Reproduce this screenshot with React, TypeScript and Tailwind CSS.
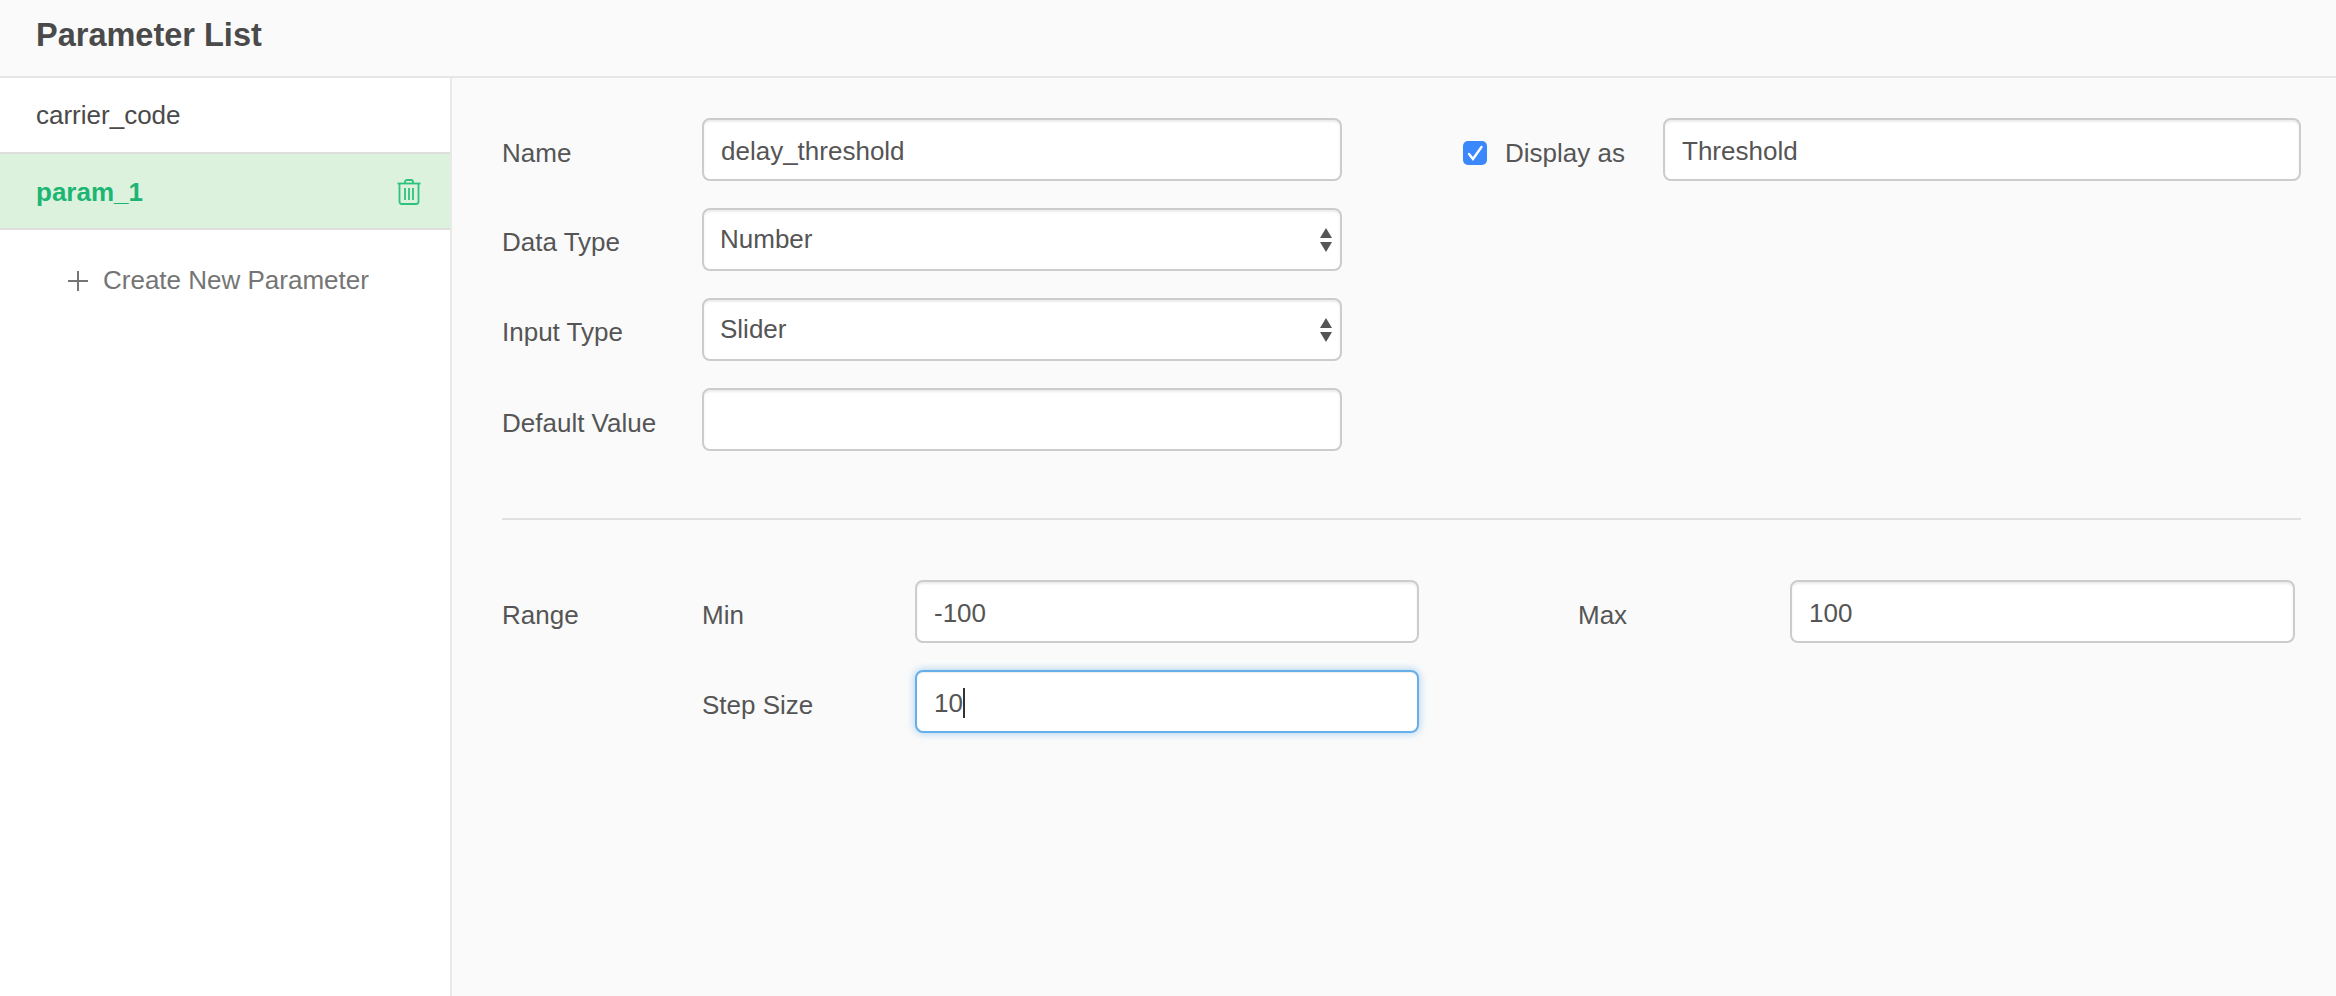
const box =
  "h-[63px] shrink-0 rounded-lg border-2 border-[#cccccc] bg-white text-[26px] text-[#555555] shadow-[inset_0_2px_2px_rgba(0,0,0,0.075)] outline-none";
const field = `${box} px-[17px] pt-[3px]`;
const rangeField = `${box} px-[17px] pt-[4px]`;

function Label({ text, width, offset = "pt-[7px]" }: { text: string; width: string; offset?: string }) {
  return <div className={`${width} ${offset} shrink-0 text-[26px] text-[#555555]`}>{text}</div>;
}

function Arrows() {
  return (
    <svg className="pointer-events-none absolute right-[10px] top-[20px]" width="12" height="24" viewBox="0 0 12 24">
      <path d="M6 0L12 10H0Z M6 24L0 14H12Z" fill="#555555" />
    </svg>
  );
}

function SelectField({ value }: { value: string }) {
  return (
    <div className="relative w-[640px] shrink-0">
      <select defaultValue={value} className={`${box} w-full appearance-none px-[16px]`}>
        <option>{value}</option>
      </select>
      <Arrows />
    </div>
  );
}

function Row({ label, offset, children }: { label: string; offset?: string; children: React.ReactNode }) {
  return (
    <div className="flex h-[63px] items-center">
      <Label text={label} width="w-[200px]" offset={offset} />
      {children}
    </div>
  );
}

export default function App() {
  return (
    <div className="flex h-[996px] w-[2336px] flex-col overflow-hidden bg-[#fafafa] font-['Liberation_Sans',Arial,sans-serif]">
      <header className="flex h-[78px] shrink-0 items-center border-b-2 border-[#e6e6e6] pb-[6px] pl-[36px] text-[32.500px] font-bold text-[#4a4a4a]">
        Parameter List
      </header>
      <div className="flex min-h-0 flex-1">
        <aside className="w-[452px] shrink-0 border-r-2 border-[#e9e9e9] bg-white">
          <div className="flex h-[74px] items-center pl-[36px] text-[26px] text-[#4a4a4a]">carrier_code</div>
          <div className="flex h-[78px] items-center justify-between border-y-2 border-[#dedede] bg-[#dcf2dd] pl-[36px] pr-[29px] text-[26px] font-bold text-[#1cb573]">
            <span className="pt-[2px]">param_1</span>
            <svg className="mt-[2px]" width="24" height="26" viewBox="0 0 24 26" fill="none" stroke="#2ec27e" strokeWidth="1.800">
              <path d="M0.500 4.500H23.500" />
              <path d="M8 4.500V3C8 1.800 9 1 10.200 1H13.800C15 1 16 1.800 16 3V4.500" />
              <path d="M2.500 4.500V22.500C2.500 24 3.500 25 5 25H19C20.500 25 21.500 24 21.500 22.500V4.500" />
              <path d="M8 9V21M12 9V21M16 9V21" />
            </svg>
          </div>
          <div className="flex items-center pl-[68px] pt-[31px] text-[26px] text-[#757575]">
            <svg className="mr-[15px]" width="20" height="20" viewBox="0 0 20 20" stroke="#757575" strokeWidth="2">
              <path d="M10 0V20M0 10H20" />
            </svg>
            Create New Parameter
          </div>
        </aside>
        <main className="min-w-0 flex-1 pl-[50px] pr-[35px] pt-[40px]">
          <div className="flex justify-between">
            <div className="flex flex-col gap-[27px]">
              <Row label="Name">
                <input readOnly value="delay_threshold" className={`${field} w-[640px]`} />
              </Row>
              <Row label="Data Type" offset="pt-[5px]">
                <SelectField value="Number" />
              </Row>
              <Row label="Input Type" offset="pt-[6px]">
                <SelectField value="Slider" />
              </Row>
              <Row label="Default Value" offset="pt-[8px]">
                <input readOnly value="" className={`${field} w-[640px]`} />
              </Row>
            </div>
            <div className="flex h-[63px] items-center">
              <span className="mt-[6px] flex h-[24px] w-[24px] shrink-0 items-center justify-center rounded-[5px] bg-[#3b88fd]">
                <svg width="24" height="24" viewBox="0 0 24 24" fill="none" stroke="white" strokeWidth="2.400" strokeLinecap="round">
                  <path d="M6 13L10 18L18.500 6" />
                </svg>
              </span>
              <div className="ml-[18px] w-[158px] shrink-0 whitespace-nowrap pt-[7px] text-[26px] text-[#555555]">Display as</div>
              <input readOnly value="Threshold" className={`${field} w-[638px]`} />
            </div>
          </div>
          <div className="mb-[60px] mt-[67px] h-[2px] bg-[#e0e0e0]" />
          <div className="flex flex-col gap-[27px]">
            <div className="flex h-[63px] items-center">
              <Label text="Range" width="w-[200px]" />
              <Label text="Min" width="w-[213px]" />
              <input readOnly value="-100" className={`${rangeField} w-[504px]`} />
              <Label text="Max" width="ml-[159px] w-[212px]" />
              <input readOnly value="100" className={`${rangeField} w-[505px]`} />
            </div>
            <div className="flex h-[63px] items-center pl-[200px]">
              <Label text="Step Size" width="w-[213px]" />
              <div className="flex h-[63px] w-[504px] shrink-0 items-center rounded-lg border-2 border-[#66afe9] bg-white px-[17px] pt-[4px] text-[26px] text-[#555555] shadow-[inset_0_1px_1px_rgba(0,0,0,0.075),0_0_8px_rgba(102,175,233,0.6)]">
                10
                <span className="-mt-[2px] h-[30px] w-[2px] bg-[#333333]" />
              </div>
            </div>
          </div>
        </main>
      </div>
    </div>
  );
}
